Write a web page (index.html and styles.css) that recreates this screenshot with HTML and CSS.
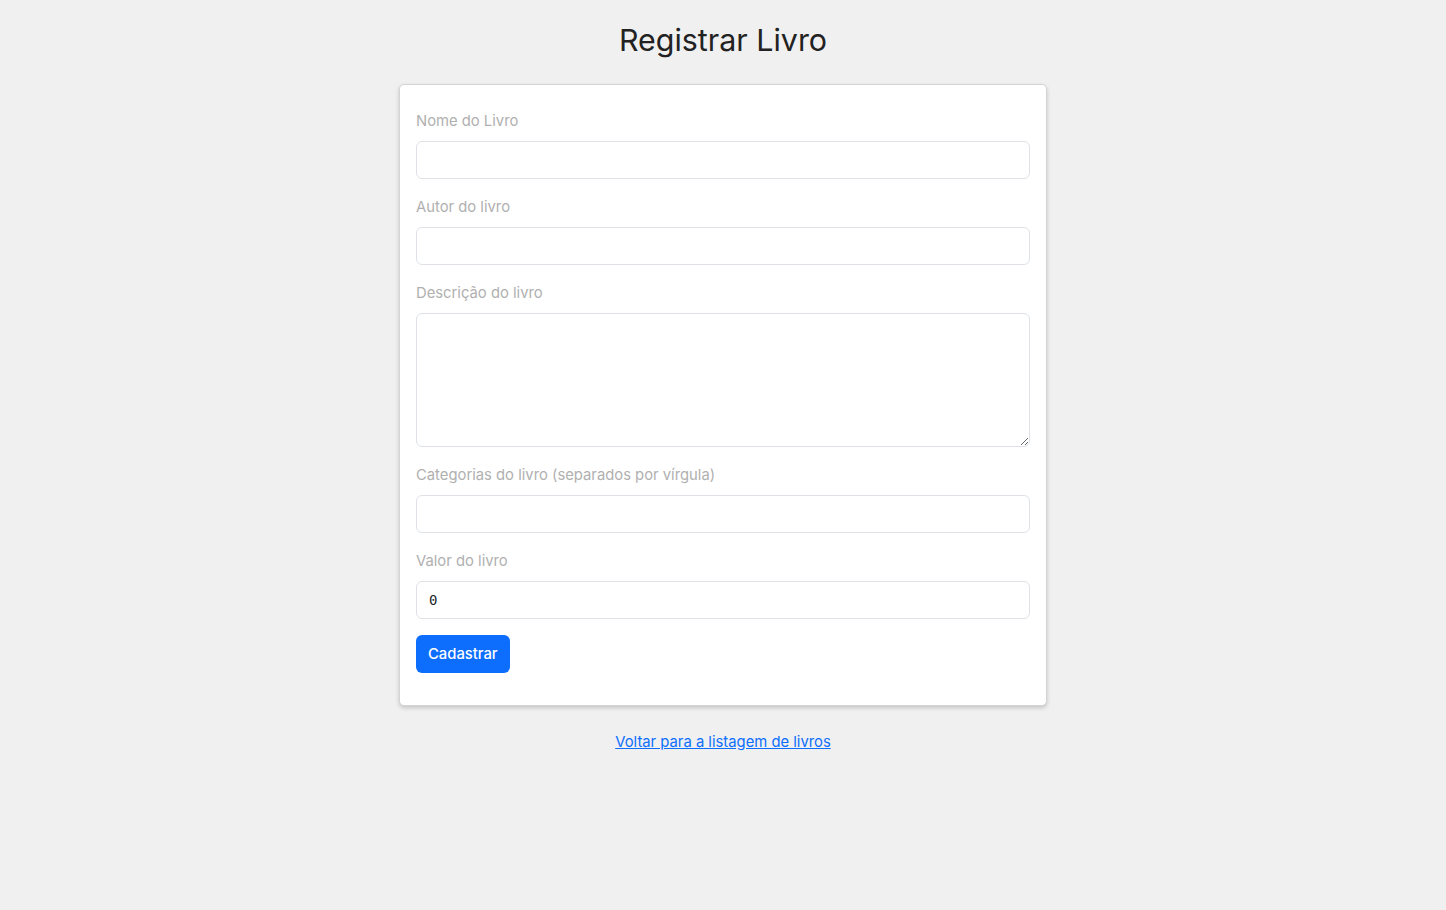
FILE: index.html
```html
<!DOCTYPE html>
<html lang="pt-BR">
<head>
<meta charset="utf-8">
<title>Registrar Livro</title>
<link rel="stylesheet" href="styles.css">
</head>
<body>
<main class="page">
  <h1 class="title">Registrar Livro</h1>
  <form class="card">
    <div class="field">
      <label class="label" for="nome">Nome do Livro</label>
      <input class="control" id="nome" type="text">
    </div>
    <div class="field">
      <label class="label" for="autor">Autor do livro</label>
      <input class="control" id="autor" type="text">
    </div>
    <div class="field">
      <label class="label" for="desc">Descrição do livro</label>
      <textarea class="control area" id="desc"></textarea>
    </div>
    <div class="field">
      <label class="label" for="cat">Categorias do livro (separados por vírgula)</label>
      <input class="control" id="cat" type="text">
    </div>
    <div class="field">
      <label class="label" for="valor">Valor do livro</label>
      <input class="control mono" id="valor" type="text" value="0">
    </div>
    <button class="btn" type="button">Cadastrar</button>
  </form>
  <a class="back" href="#">Voltar para a listagem de livros</a>
</main>
</body>
</html>
```

FILE: styles.css
```css
* { box-sizing: border-box; }
html, body {
  margin: 0;
  background: #f0f0f0;
  font-family: Inter, "Noto Sans", sans-serif;
  color: #212529;
}
.page {
  display: flex;
  flex-direction: column;
  align-items: center;
}
.title {
  margin: 21px 0 25px;
  font-size: 30.4px;
  line-height: 38px;
  font-weight: 400;
  color: #222;
}
.card {
  width: 648px;
  background: #fff;
  border: 1px solid #d4d4d4;
  border-radius: 5px;
  box-shadow: 0 2px 4px rgba(0,0,0,0.18);
  padding: 24px 16px 32px;
  display: flex;
  flex-direction: column;
  align-items: flex-start;
}
.field {
  width: 100%;
  margin-bottom: 16px;
}
.label {
  display: block;
  font-size: 14.8px;
  line-height: 24px;
  color: #b0b0b0;
  margin-bottom: 8px;
}
.control {
  display: block;
  width: 100%;
  height: 38px;
  border: 1px solid #dee2e6;
  border-radius: 6px;
  background: #fff;
  padding: 6px 12px;
  font-family: Inter, sans-serif;
  font-size: 15px;
  color: #212529;
  outline: none;
}
.area {
  height: 134px;
  resize: vertical;
}
.mono {
  font-family: "DejaVu Sans Mono", monospace;
  font-size: 14px;
  color: #212529;
}
.btn {
  height: 38px;
  padding: 0 12px;
  border: 0;
  border-radius: 6px;
  background: #0d6efd;
  color: #fff;
  font-family: Inter, sans-serif;
  font-size: 14.8px;
  font-weight: 500;
  cursor: pointer;
}
.back {
  margin-top: 26px;
  font-size: 14.8px;
  line-height: 20px;
  color: #0d6efd;
  text-decoration: underline;
}
```
